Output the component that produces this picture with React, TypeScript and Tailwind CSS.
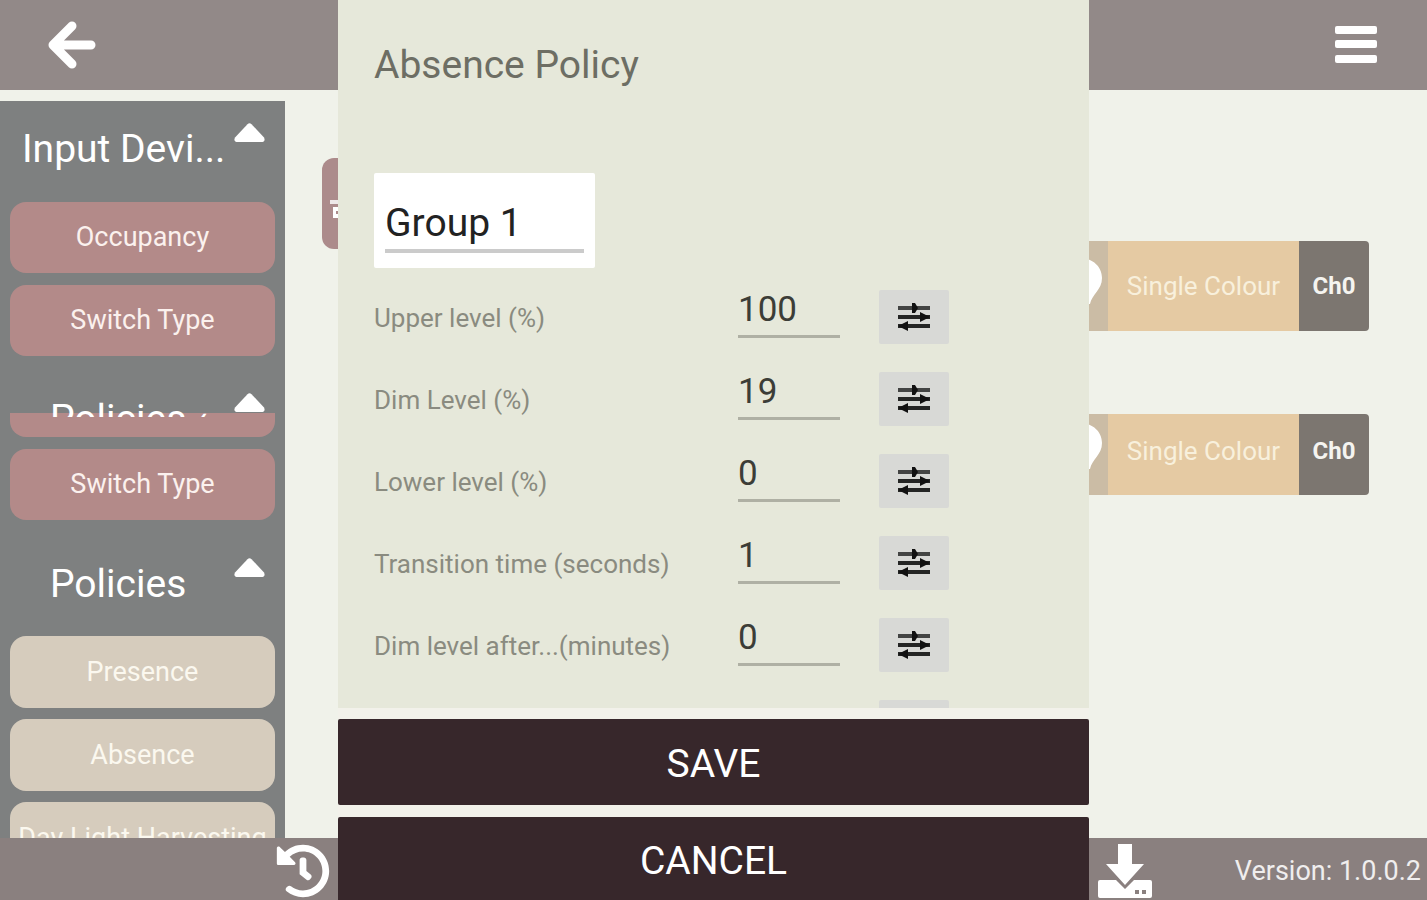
import { FaHistory } from "react-icons/fa";

type settingType = {
    id: string;
    label: string;
    value: string;
};

const settings: settingType[] = [
    { id: "upper", label: "Upper level (%)", value: "100" },
    { id: "dim", label: "Dim Level (%)", value: "19" },
    { id: "lower", label: "Lower level (%)", value: "0" },
    { id: "transition", label: "Transition time (seconds)", value: "1" },
    { id: "dimafter", label: "Dim level after...(minutes)", value: "0" },
];

function SlidersIcon() {
    return (
        <svg className="w-8 h-7" viewBox="0 0 32 28" fill="#111" aria-hidden="true">
            <path d="M0 3h32v4H0z" opacity="0.75" />
            <path d="M0 12h32v4H0z M0 21h32v4H0z" opacity="0.9" />
            <path d="M14 0h3l3 5-3 5h-3z M22 9l10 5-10 5z M10 18L0 23l10 5z" />
        </svg>
    );
}

function SectionHeading({ title, className }: { title: string; className: string }) {
    return (
        <div className={`flex justify-between pr-5 shrink-0 ${className}`}>
            <h2 className="text-[39px] leading-[48px] mt-6 whitespace-nowrap">{title}</h2>
            <button type="button" aria-label={`Collapse ${title}`} className="self-start mt-[22px]">
                <svg className="w-[31px] h-5" viewBox="0 0 31 20" fill="white">
                    <path d="M13.5 1.2q2-1.8 4 0L30 14.500q2 4.500-3 4.500H4q-5 0-3-4.500z" />
                </svg>
            </button>
        </div>
    );
}

function InputButton({ label }: { label: string }) {
    return (
        <button type="button" className="h-[71px] shrink-0 w-full rounded-2xl bg-[#b38a89] text-[27px] text-[#fbf1ee]">
            {label}
        </button>
    );
}

function PolicyButton({ label }: { label: string }) {
    return (
        <button type="button" className="h-[72px] shrink-0 w-full rounded-2xl bg-[#d6ccbd] text-[27px] text-[#fbf8ef] whitespace-nowrap">
            {label}
        </button>
    );
}

function ChannelCard({ className }: { className: string }) {
    return (
        <div className={`absolute right-[58px] flex rounded-sm overflow-hidden text-[26px] leading-8 ${className}`}>
            <div className="w-[60px] bg-[#cbbca5] flex justify-end pr-1.5">
                <svg className="w-11 h-14 -mt-3" viewBox="0 0 44 56" fill="white" aria-hidden="true">
                    <path d="M22 0c13 0 22 9 22 20 0 12-10 16-12 26H12C10 36 0 32 0 20 0 9 9 0 22 0z M13 49h18v3q-3 4-9 4t-9-4z" />
                </svg>
            </div>
            <div className="w-[191px] bg-[#e5caa3] text-[#f8f0dc] text-center">Single Colour</div>
            <div className="w-[70px] bg-[#7c7670] text-[#f5f4f0] text-2xl leading-8 font-bold text-center">Ch0</div>
        </div>
    );
}

function Sidebar() {
    return (
        <aside className="w-[285px] shrink-0 mt-[11px] bg-[#7e8080] text-white flex flex-col overflow-hidden">
            <SectionHeading title="Input Devi..." className="h-[101px] pl-[22px]" />
            <div className="flex flex-col gap-3 px-2.5">
                <InputButton label="Occupancy" />
                <InputButton label="Switch Type" />
            </div>
            <SectionHeading title="Policies ‹" className="relative z-10 h-[46px] mt-[15px] overflow-hidden pl-[50px]" />
            <div className="flex flex-col gap-3 px-2.5 -mt-1">
                <div className="flex flex-col justify-end h-6 overflow-hidden">
                    <InputButton label="" />
                </div>
                <InputButton label="Switch Type" />
            </div>
            <SectionHeading title="Policies" className="h-[116px] pl-[50px] pt-4" />
            <div className="flex flex-col gap-[11px] px-2.5">
                <PolicyButton label="Presence" />
                <PolicyButton label="Absence" />
                <PolicyButton label="Day Light Harvesting" />
            </div>
        </aside>
    );
}

function PolicyDialog() {
    return (
        <div className="absolute inset-0 flex justify-center pointer-events-none">
            <form role="dialog" aria-label="Absence Policy" className="w-[751px] max-w-full h-full flex flex-col bg-[#f2f1ea] pointer-events-auto">
                <div className="flex-1 min-h-0 overflow-hidden bg-[#e6e8da] px-9">
                    <h1 className="pt-[41px] text-[39px] leading-[48px] text-[#6d6e64]">Absence Policy</h1>
                    <div className="mt-[84px] w-[221px] h-[95px] rounded-xs bg-white px-[11px] pt-[25px]">
                        <input
                            type="text"
                            aria-label="Group name"
                            defaultValue="Group 1"
                            className="block w-full h-[55px] border-b-4 border-[#cbcbcb] text-[39px] text-[#222] outline-none"
                        />
                    </div>
                    <div className="mt-[22px]">
                        {settings.map((s) => (
                            <div key={s.id} className="flex h-[82px]">
                                <label htmlFor={s.id} className="w-[364px] pt-3 text-[26px] leading-8 text-[#8a8b80]">
                                    {s.label}
                                </label>
                                <input
                                    id={s.id}
                                    type="text"
                                    defaultValue={s.value}
                                    className="w-[102px] h-12 pb-1 border-b-3 border-[#afb0a4] text-[35px] text-[#3c3d37] outline-none"
                                />
                                <button type="button" aria-label={`Adjust ${s.label}`} className="ml-[39px] w-[70px] h-[54px] rounded-xs bg-[#d8d9d6] flex items-center justify-center">
                                    <SlidersIcon />
                                </button>
                            </div>
                        ))}
                        <button type="button" aria-label="Adjust next level" className="ml-[505px] block w-[70px] h-[54px] rounded-xs bg-[#d8d9d6]"></button>
                    </div>
                </div>
                <button type="button" className="mt-[11px] h-[86px] shrink-0 rounded-xs bg-[#37272b] text-white text-[39px] pt-1">
                    SAVE
                </button>
                <button type="button" className="mt-3 h-[83px] shrink-0 rounded-t-xs bg-[#37272b] text-white text-[39px] pt-1.5">
                    CANCEL
                </button>
            </form>
        </div>
    );
}

export default function App() {
    return (
        <div className="relative h-screen flex flex-col overflow-hidden bg-[#f0f2ea] font-[Roboto,sans-serif]">
            <header className="h-[90px] shrink-0 bg-[#928988] flex items-center justify-between pl-12 pr-[50px]">
                <button type="button" aria-label="Back">
                    <svg className="w-12 h-12" viewBox="0 0 48 48" fill="none" stroke="white" strokeWidth="9" strokeLinecap="round" strokeLinejoin="round">
                        <path d="M24 5L5 24l19 19M7 24h36" />
                    </svg>
                </button>
                <button type="button" aria-label="Menu">
                    <svg className="w-[42px] h-10" viewBox="0 0 42 40" fill="white">
                        <rect x="0" y="1" width="42" height="8" rx="2" />
                        <rect x="0" y="15" width="42" height="8" rx="2" />
                        <rect x="0" y="30" width="42" height="8" rx="2" />
                    </svg>
                </button>
            </header>

            <div className="flex flex-1 min-h-0">
                <Sidebar />
                <main className="relative flex-1 overflow-hidden">
                    <div className="absolute left-[37px] top-[68px] w-40 h-[91px] rounded-xl bg-[#ac8b8b] pl-2 pt-[42px]">
                        <svg className="w-8 h-5" viewBox="0 0 32 20" fill="white" aria-hidden="true">
                            <path d="M0 0h32v4H0z" opacity="0.8" />
                            <path d="M3 7h26v11H3z" />
                            <path d="M6 11h4v3H6z" fill="#ac8b8b" />
                        </svg>
                    </div>
                    <ChannelCard className="top-[151px] h-[90px] *:pt-[29px]" />
                    <ChannelCard className="top-[324px] h-[81px] *:pt-[21px]" />
                </main>
            </div>

            <footer className="h-[62px] shrink-0 bg-[#8a807f] text-white grid grid-cols-[1fr_751px_1fr] items-center">
                <button type="button" aria-label="History" className="justify-self-end mr-2 mt-1">
                    <FaHistory className="w-[54px] h-[54px]" />
                </button>
                <div className="col-start-3 flex items-center justify-between pl-[9px] pr-1.5">
                    <button type="button" aria-label="Download" className="pt-1">
                        <svg className="w-[54px] h-[54px]" viewBox="0 0 54 54">
                            <path fill="white" d="M20 0h14v20h12L27 41 8 20h12z" />
                            <path fill="white" d="M2 36h16l9 9 9-9h16q2 0 2 2v14q0 2-2 2H2q-2 0-2-2V38q0-2 2-2z" />
                            <path fill="#8a807f" d="M37 46h4v4h-4z M44 46h4v4h-4z" />
                        </svg>
                    </button>
                    <span className="text-[27px] leading-8 pt-1 text-[#f0eeee]">Version: 1.0.0.2</span>
                </div>
            </footer>

            <PolicyDialog />
        </div>
    );
}
